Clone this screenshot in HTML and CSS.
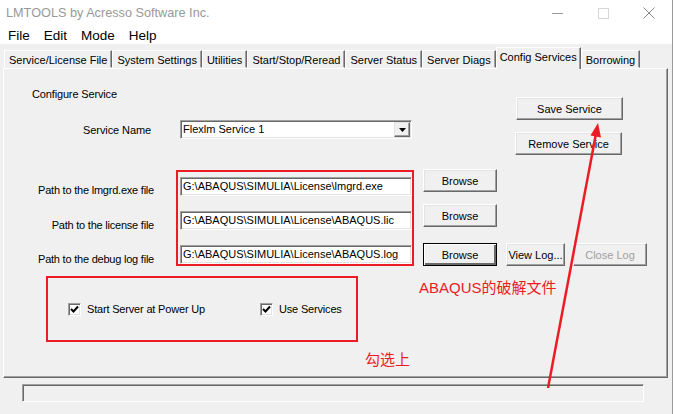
FILE: index.html
```html
<!DOCTYPE html>
<html lang="en">
<head>
    <meta charset="UTF-8">
    <title>LMTOOLS by Acresso Software Inc.</title>
    <link rel="stylesheet" href="styles.css">
</head>
<body>
<div class="window">
    <!-- title bar -->
    <div class="title-bar">
        <span class="title">LMTOOLS by Acresso Software Inc.</span>
        <div class="controls">
            <span class="ctl"><svg width="11" height="11" viewBox="0 0 11 11"><line x1="0" y1="5.5" x2="11" y2="5.5" stroke="#9a9a9a" stroke-width="1"/></svg></span>
            <span class="ctl"><svg width="11" height="11" viewBox="0 0 11 11"><rect x="0.5" y="0.5" width="10" height="10" fill="none" stroke="#d6d6d6" stroke-width="1"/></svg></span>
            <span class="ctl"><svg width="12" height="12" viewBox="0 0 12 12"><path d="M0.5 0.5 L11.5 11.5 M11.5 0.5 L0.5 11.5" stroke="#8a8a8a" stroke-width="1"/></svg></span>
        </div>
    </div>

    <div class="menu-bar">
        <span>File</span>
        <span>Edit</span>
        <span>Mode</span>
        <span>Help</span>
    </div>

    <div class="client">
        <div class="tabs">
            <div class="tab">Service/License File</div>
            <div class="tab">System Settings</div>
            <div class="tab">Utilities</div>
            <div class="tab">Start/Stop/Reread</div>
            <div class="tab">Server Status</div>
            <div class="tab">Server Diags</div>
            <div class="tab active">Config Services</div>
            <div class="tab">Borrowing</div>
        </div>

        <div class="panel">
            <div class="top-row">
                <div class="service-block">
                    <div class="group-title">Configure Service</div>
                    <div class="service-row">
                        <label class="field-label">Service Name</label>
                        <div class="combo">
                            <span class="combo-text">Flexlm Service 1</span>
                            <span class="combo-btn">
                                <svg width="7" height="4" viewBox="0 0 7 4"><polygon points="0,0 7,0 3.5,4" fill="#000"/></svg>
                            </span>
                        </div>
                    </div>
                </div>
                <div class="service-buttons">
                    <button class="btn wide">Save Service</button>
                    <button class="btn wide shift">Remove Service</button>
                </div>
            </div>

            <div class="paths">
                <div class="path-labels">
                    <label>Path to the lmgrd.exe file</label>
                    <label>Path to the license file</label>
                    <label>Path to the debug log file</label>
                </div>
                <div class="path-inputs mark">
                    <div class="textbox">G:\ABAQUS\SIMULIA\License\lmgrd.exe</div>
                    <div class="textbox">G:\ABAQUS\SIMULIA\License\ABAQUS.lic</div>
                    <div class="textbox">G:\ABAQUS\SIMULIA\License\ABAQUS.log</div>
                </div>
                <div class="path-buttons">
                    <button class="btn">Browse</button>
                    <button class="btn second">Browse</button>
                    <div class="log-row">
                        <button class="btn default">Browse</button>
                        <button class="btn view-log">View Log...</button>
                        <button class="btn close-log" disabled>Close Log</button>
                    </div>
                </div>
            </div>

            <div class="options-row">
                <div class="options mark">
                    <label class="check first">
                        <span class="box"><svg width="9" height="9" viewBox="0 0 9 9"><polyline points="1,4 3.5,6.5 8,1.5" fill="none" stroke="#000" stroke-width="2"/></svg></span>
                        Start Server at Power Up
                    </label>
                    <label class="check">
                        <span class="box"><svg width="9" height="9" viewBox="0 0 9 9"><polyline points="1,4 3.5,6.5 8,1.5" fill="none" stroke="#000" stroke-width="2"/></svg></span>
                        Use Services
                    </label>
                </div>
                <div class="note">ABAQUS的破解文件</div>
            </div>
            <div class="note note-check">勾选上</div>
        </div>

        <div class="status-bar"></div>
    </div>

    <!-- annotation arrow drawn over the dialog -->
    <svg class="arrow" width="673" height="414" viewBox="0 0 673 414">
        <line x1="548" y1="388" x2="595.6" y2="135.8" stroke="#ec1c24" stroke-width="2.5"/>
        <polygon points="598,123 590.5,135.5 601,137.5" fill="#ec1c24"/>
    </svg>
</div>
</body>
</html>
```

FILE: styles.css
```css
/* window frame */
body {
    margin: 0;
    background: #f0f0f0;
    font-family: "Liberation Sans", Arial, sans-serif;
    font-size: 11px;
    color: #000;
}

.window {
    position: relative;
    width: 672px;
    height: 414px;
    border-right: 1px solid #9a9a9a;
    background: #f0f0f0;
    overflow: hidden;
}

.title-bar {
    height: 26px;
    background: #fff;
    display: flex;
    align-items: center;
}

.title {
    padding-left: 6px;
    font-size: 12.7px;
    color: #999;
}

.controls {
    margin-left: auto;
    display: flex;
}

.ctl {
    width: 46px;
    height: 26px;
    display: flex;
    align-items: center;
    justify-content: center;
}

.menu-bar {
    height: 18px;
    background: #fff;
    display: flex;
    align-items: center;
    gap: 14px;
    padding-left: 8px;
    font-size: 13.5px;
}

/* tabs */
.tabs {
    display: flex;
    align-items: flex-end;
    height: 21px;
    margin-top: 3px;
    margin-left: 4px;
    position: relative;
    z-index: 1;
}

.tab {
    height: 18px;
    box-sizing: border-box;
    padding: 0 4px;
    line-height: 18px;
    border: 1px solid;
    border-color: #fff #696969 transparent #fff;
    box-shadow: inset -1px 0 #a0a0a0;
    white-space: nowrap;
}

.tab.active {
    height: 22px;
    margin-bottom: -1px;
    line-height: 18px;
    padding: 0 3px;
    border-bottom: none;
    background: #f0f0f0;
}

.panel {
    margin-left: 3px;
    width: 665px;
    height: 310px;
    box-sizing: border-box;
    border: 1px solid;
    border-color: #fff #696969 #696969 #fff;
    box-shadow: inset -1px -1px #a0a0a0;
}

/* controls */
.btn {
    font-family: "Liberation Sans", Arial, sans-serif;
    font-size: 11px;
    color: #000;
    background: #f0f0f0;
    width: 74px;
    height: 23px;
    padding: 0;
    box-sizing: border-box;
    border: 1px solid;
    border-color: #fff #696969 #696969 #fff;
    box-shadow: inset -1px -1px #a0a0a0, inset 1px 1px #e3e3e3;
    display: block;
}

.btn.wide {
    width: 107px;
}

.btn.default {
    border-color: #000;
    box-shadow: inset 1px 1px #fff, inset -2px -2px #696969;
}

.btn:disabled {
    color: #a0a0a0;
}

.textbox,
.combo {
    height: 19px;
    width: 232px;
    box-sizing: border-box;
    background: #fff;
    border: 1px solid;
    border-color: #a0a0a0 #fff #fff #a0a0a0;
    box-shadow: inset 1px 1px #696969, inset -1px -1px #e3e3e3;
    padding-left: 2px;
    line-height: 17px;
    white-space: nowrap;
    overflow: hidden;
}

.combo {
    display: flex;
    align-items: center;
    padding-right: 1px;
}

.combo-btn {
    margin-left: auto;
    width: 16px;
    height: 15px;
    box-sizing: border-box;
    border: 1px solid;
    border-color: #e3e3e3 #696969 #696969 #e3e3e3;
    box-shadow: inset -1px -1px #a0a0a0;
    background: #f0f0f0;
    display: flex;
    align-items: center;
    justify-content: center;
}

.mark {
    border: 2px solid #ec1c24;
}

/* top section */
.top-row {
    display: flex;
}

.service-block {
    width: 408px;
    padding-top: 18px;
}

.group-title {
    margin-left: 28px;
    line-height: 14px;
    letter-spacing: -0.15px;
}

.service-row {
    display: flex;
    align-items: center;
    margin-top: 19px;
}

.field-label {
    width: 147px;
    text-align: right;
    line-height: 14px;
    letter-spacing: -0.1px;
}

.service-row .combo {
    margin-left: 29px;
}

.service-buttons {
    margin-left: 104px;
    padding-top: 28px;
    display: flex;
    flex-direction: column;
    gap: 12px;
}

.btn.shift {
    margin-left: -1px;
}

/* path section */
.paths {
    display: flex;
    margin-top: 14px;
}

.path-labels {
    width: 150px;
    padding-top: 14px;
    text-align: right;
    letter-spacing: -0.22px;
}

.path-labels label {
    display: block;
    line-height: 14px;
}

.path-labels label + label {
    margin-top: 21px;
}

.path-labels label:last-child {
    margin-top: 20px;
}

.path-inputs {
    margin-left: 22px;
    margin-top: 1px;
    padding: 5px 0 0 2px;
    display: flex;
    flex-direction: column;
    gap: 15px;
}

.path-buttons {
    margin-left: 9px;
}

.btn.second {
    margin-top: 12px;
}

.log-row {
    display: flex;
    margin-top: 16px;
}

.btn.view-log {
    width: 59px;
    margin-left: 9px;
}

.btn.close-log {
    margin-left: 8px;
}

/* options */
.options-row {
    display: flex;
    align-items: flex-start;
    margin-top: 10px;
}

.options {
    margin-left: 42px;
    width: 312px;
    height: 66px;
    box-sizing: border-box;
    display: flex;
    align-items: center;
    padding-left: 20px;
}

.check {
    display: flex;
    align-items: center;
    gap: 6px;
    line-height: 14px;
    letter-spacing: -0.18px;
}

.check.first {
    width: 192px;
}

.box {
    width: 13px;
    height: 13px;
    box-sizing: border-box;
    background: #fff;
    border: 1px solid;
    border-color: #a0a0a0 #fff #fff #a0a0a0;
    box-shadow: inset 1px 1px #696969, inset -1px -1px #e3e3e3;
    display: flex;
    align-items: center;
    justify-content: center;
}

.note {
    font-family: "Liberation Sans", "Noto Sans CJK SC", sans-serif;
    font-size: 15px;
    line-height: 20px;
    color: #ec1c24;
    margin-left: 61px;
    margin-top: 2px;
}

.note-check {
    margin-left: 361px;
    margin-top: 8px;
}

.status-bar {
    margin: 6px 0 0 22px;
    width: 622px;
    height: 18px;
    box-sizing: border-box;
    border: 1px solid;
    border-color: #a0a0a0 #fff #fff #a0a0a0;
    box-shadow: inset 1px 1px #696969;
}

.arrow {
    position: absolute;
    left: 0;
    top: 0;
    pointer-events: none;
}
```
